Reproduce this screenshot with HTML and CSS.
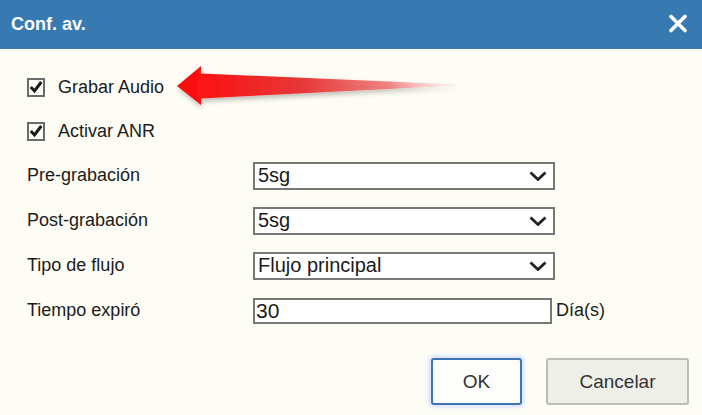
FILE: index.html
```html
<!DOCTYPE html>
<html lang="es">
<head>
    <meta charset="UTF-8">
    <title>Conf. av.</title>
    <link rel="stylesheet" href="styles.css">
</head>
<body>
    <div class="dialog">
        <!-- Title bar -->
        <div class="dialog-header">
            <span class="dialog-title">Conf. av.</span>
            <svg class="close-icon" width="20" height="19" viewBox="0 0 20 19">
                <path d="M3 2.5 L17 16.5 M17 2.5 L3 16.5" stroke="#fff" stroke-width="3.6" stroke-linecap="round"/>
            </svg>
        </div>

        <div class="dialog-body">
            <div class="row check-row">
                <span class="checkbox">
                    <svg width="14" height="14" viewBox="0 0 14 14"><path d="M1.8 7 L5.5 11 L12.3 2" fill="none" stroke="#1a1a1a" stroke-width="3"/></svg>
                </span>
                <span class="check-label">Grabar Audio</span>
            </div>
            <div class="row check-row">
                <span class="checkbox">
                    <svg width="14" height="14" viewBox="0 0 14 14"><path d="M1.8 7 L5.5 11 L12.3 2" fill="none" stroke="#1a1a1a" stroke-width="3"/></svg>
                </span>
                <span class="check-label">Activar ANR</span>
            </div>

            <div class="row field-row">
                <span class="field-label">Pre-grabación</span>
                <div class="select">
                    <span>5sg</span>
                    <svg class="chevron" width="18" height="10" viewBox="0 0 18 10"><path d="M1.5 1.5 L9 8.5 L16.5 1.5" fill="none" stroke="#222" stroke-width="2.8"/></svg>
                </div>
            </div>
            <div class="row field-row">
                <span class="field-label">Post-grabación</span>
                <div class="select">
                    <span>5sg</span>
                    <svg class="chevron" width="18" height="10" viewBox="0 0 18 10"><path d="M1.5 1.5 L9 8.5 L16.5 1.5" fill="none" stroke="#222" stroke-width="2.8"/></svg>
                </div>
            </div>
            <div class="row field-row">
                <span class="field-label">Tipo de flujo</span>
                <div class="select">
                    <span>Flujo principal</span>
                    <svg class="chevron" width="18" height="10" viewBox="0 0 18 10"><path d="M1.5 1.5 L9 8.5 L16.5 1.5" fill="none" stroke="#222" stroke-width="2.8"/></svg>
                </div>
            </div>
            <div class="row field-row">
                <span class="field-label">Tiempo expiró</span>
                <div class="text-input">30</div>
                <span class="unit">Día(s)</span>
            </div>

            <div class="dialog-footer">
                <button class="btn btn-ok">OK</button>
                <button class="btn btn-cancel">Cancelar</button>
            </div>
        </div>

        <!-- red pointer arrow drawn over the form -->
        <svg class="pointer-arrow" width="300" height="62" viewBox="0 0 300 62">
            <defs>
                <linearGradient id="arrowFill" x1="0" y1="0" x2="1" y2="0">
                    <stop offset="0" stop-color="#ff0a0a"/>
                    <stop offset="0.45" stop-color="#e63838"/>
                    <stop offset="0.75" stop-color="#ee7070" stop-opacity="0.85"/>
                    <stop offset="1" stop-color="#fbd0d0" stop-opacity="0.2"/>
                </linearGradient>
                <filter id="arrowShadow" x="-10%" y="-40%" width="120%" height="180%">
                    <feDropShadow dx="1" dy="3" stdDeviation="2.5" flood-color="#000" flood-opacity="0.25"/>
                </filter>
            </defs>
            <path d="M7 31 L31 11 L31 18.5 L288 29.5 L288 30.5 L31 43.5 L31 50 Z" fill="url(#arrowFill)" filter="url(#arrowShadow)"/>
        </svg>
    </div>
</body>
</html>
```

FILE: styles.css
```css
/* Dialog layout */
body {
    margin: 0;
    background: #fdfdf5;
    font-family: "Liberation Sans", Arial, sans-serif;
    color: #1b1b1b;
}
.dialog {
    position: relative;
    width: 702px;
    height: 415px;
    background: #fdfdf5;
}
.dialog-header {
    height: 49px;
    background: #367ab1;
    display: flex;
    align-items: center;
    justify-content: space-between;
    padding: 0 14px 0 11px;
}
.dialog-title {
    color: #fff;
    font-weight: bold;
    font-size: 18px;
}
.close-icon {
    display: block;
    margin-top: -2px;
}
.dialog-body {
    padding: 16px 13px 0 27px;
}
.row {
    display: flex;
    align-items: center;
}
.check-row {
    height: 44px;
}
.field-row {
    height: 45px;
}
.checkbox {
    width: 14px;
    height: 15px;
    border: 2px solid #6b6b6b;
    background: #fdfdf5;
    display: flex;
    align-items: center;
    justify-content: center;
    margin-right: 13px;
}
.checkbox svg {
    display: block;
}
.check-label, .field-label, .unit {
    font-size: 18px;
}
.field-label {
    width: 226px;
}
.select {
    height: 24px;
    width: 289px;
    border: 2px solid #777;
    background: #fff;
    display: flex;
    align-items: center;
    justify-content: space-between;
    padding: 0 6px 0 3px;
    font-size: 20px;
}
.chevron {
    display: block;
}
.text-input {
    width: 293px;
    height: 22px;
    border: 2px solid #777;
    background: #fff;
    padding: 0 1px;
    font-size: 21px;
    line-height: 22px;
    margin-right: 4px;
}
.dialog-footer {
    display: flex;
    justify-content: flex-end;
    gap: 24px;
    margin-top: 25px;
}
.btn {
    height: 47px;
    font-family: "Liberation Sans", Arial, sans-serif;
    font-size: 19px;
    color: #333;
    border-radius: 3px;
    padding: 0;
}
.btn-ok {
    width: 91px;
    background: #fdfdfb;
    border: 2px solid #3c75b2;
    box-shadow: 0 0 3px 3px #e2e6ff;
}
.btn-cancel {
    width: 143px;
    background: #eeefe8;
    border: 2px solid #bdbdb8;
}
.pointer-arrow {
    position: absolute;
    left: 170px;
    top: 55px;
}
```
